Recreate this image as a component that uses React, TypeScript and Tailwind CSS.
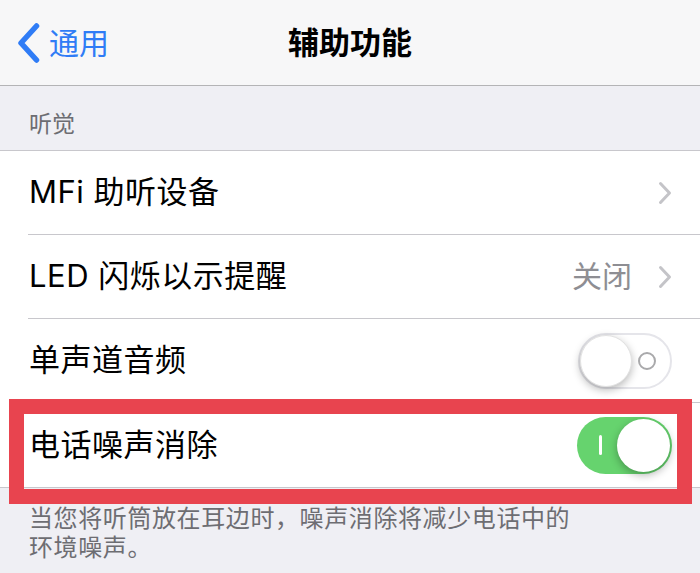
import React from 'react';

const Chevron = () => (
  <svg width="14" height="24" viewBox="0 0 14 24" className="shrink-0">
    <path d="M2.5 2.5 L11.5 12 L2.5 21.5" fill="none" stroke="#c4c4c8" strokeWidth="3" strokeLinecap="round" strokeLinejoin="round" />
  </svg>
);

const Toggle = ({ on }: { on: boolean }) =>
  on ? (
    <div className="w-[95px] h-[57px] rounded-full bg-[#66d36e] flex items-center justify-between pl-[22px] pr-[2px] shrink-0">
      <div className="w-[3px] h-[20px] bg-white rounded-sm" />
      <div className="w-[53px] h-[53px] rounded-full bg-white shadow-[0_3px_8px_rgba(0,0,0,0.3)]" />
    </div>
  ) : (
    <div className="w-[94px] h-[56px] rounded-full bg-white border-[2px] border-[#e5e5ea] flex items-center justify-between pr-[14px] shrink-0">
      <div className="w-[52px] h-[52px] rounded-full bg-white border border-[#e2e2e2] shadow-[0_3px_8px_rgba(0,0,0,0.28)]" />
      <div className="w-[18px] h-[18px] rounded-full border-[2px] border-[#a9a9ab]" />
    </div>
  );

const Row = ({ label, children, last }: { label: string; children?: React.ReactNode; last?: boolean }) => (
  <div className={`pl-[28px] ${last ? '' : ''}`}>
    <div className={`h-[84px] flex items-center justify-between pl-[1px] pr-[28px] ${last ? '' : 'border-b border-[#c8c7cc]'}`}>
      <span className="text-[31px] text-black tracking-[0.5px]">{label}</span>
      {children}
    </div>
  </div>
);

export default function App() {
  return (
    <div className="w-[700px] h-[573px] overflow-hidden bg-[#efeff4] font-[family-name:Inter,'Noto_Sans_CJK_SC',sans-serif]">
      {/* nav bar */}
      <div className="h-[86px] bg-[#f7f7f8] border-b border-[#b4b4b6] grid grid-cols-[1fr_auto_1fr] items-center">
        <div className="flex items-center pl-[17px] gap-[9px] text-[#2f7cf6]">
          <svg width="23" height="40" viewBox="0 0 23 40">
            <path d="M19.5 3 L4 20 L19.5 37" fill="none" stroke="#2f7cf6" strokeWidth="5.5" strokeLinecap="round" strokeLinejoin="round" />
          </svg>
          <span className="text-[30px] leading-none">通用</span>
        </div>
        <div className="text-[31px] font-semibold text-black leading-none">辅助功能</div>
        <div />
      </div>

      {/* section header */}
      <div className="h-[64px] flex items-end px-[29px] pb-[10px]">
        <span className="text-[23px] leading-[32px] text-[#6d6d72]">听觉</span>
      </div>

      {/* list */}
      <div className="bg-white border-t border-b border-[#c8c7cc] relative">
        <Row label="MFi 助听设备">
          <Chevron />
        </Row>
        <Row label="LED 闪烁以示提醒">
          <div className="flex items-center gap-[26px]">
            <span className="text-[30px] text-[#8e8e93]">关闭</span>
            <Chevron />
          </div>
        </Row>
        <Row label="单声道音频">
          <Toggle on={false} />
        </Row>
        <div className="relative">
          <Row label="电话噪声消除" last>
            <Toggle on />
          </Row>
          <div className="absolute left-[-19px] top-[-4px] w-[683px] h-[105px] border-[15px] border-[#e8444f] translate-x-[28px]" />
        </div>
      </div>

      {/* footer */}
      <div className="px-[29px] pt-[16px] text-[24px] leading-[29px] tracking-[0.6px] text-[#6d6d72]">
        当您将听筒放在耳边时，噪声消除将减少电话中的
        <br />
        环境噪声。
      </div>
    </div>
  );
}
